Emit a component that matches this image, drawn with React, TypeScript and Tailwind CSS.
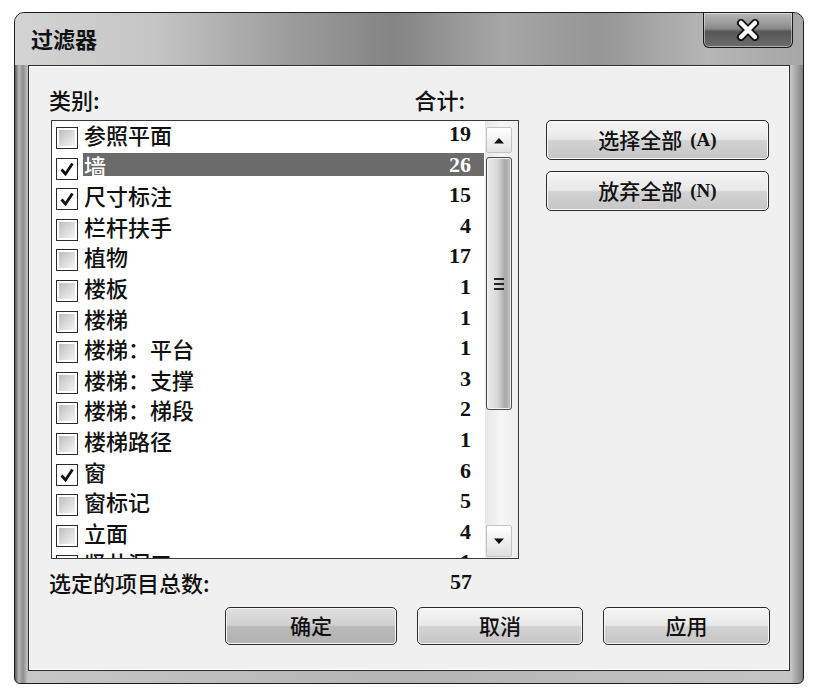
import type { ReactNode } from 'react';

type Row = { name: string; count: string; checked: boolean; selected?: boolean };

const rows: Row[] = [
  { name: '参照平面', count: '19', checked: false },
  { name: '墙', count: '26', checked: true, selected: true },
  { name: '尺寸标注', count: '15', checked: true },
  { name: '栏杆扶手', count: '4', checked: false },
  { name: '植物', count: '17', checked: false },
  { name: '楼板', count: '1', checked: false },
  { name: '楼梯', count: '1', checked: false },
  { name: '楼梯：平台', count: '1', checked: false },
  { name: '楼梯：支撑', count: '3', checked: false },
  { name: '楼梯：梯段', count: '2', checked: false },
  { name: '楼梯路径', count: '1', checked: false },
  { name: '窗', count: '6', checked: true },
  { name: '窗标记', count: '5', checked: false },
  { name: '立面', count: '4', checked: false },
  { name: '竖井洞口', count: '1', checked: false },
];

const cjk = "font-['Noto_Sans_CJK_SC',sans-serif] font-medium";
const digits = "font-['Liberation_Serif',serif] font-bold";

function Checkbox({ checked }: { checked: boolean }) {
  return (
    <div className="w-[22px] h-[22px] shrink-0 border border-[#2a2a2a] bg-white p-[2px]">
      {checked ? (
        <svg viewBox="0 0 16 16" className="w-full h-full">
          <path d="M2.5 8.5 L6.5 13 L13.5 2.5" fill="none" stroke="#111" strokeWidth="2.8" strokeLinejoin="miter" />
        </svg>
      ) : (
        <div className="w-full h-full bg-[linear-gradient(135deg,#bdbdbd_0%,#dadada_50%,#f4f4f4_100%)]" />
      )}
    </div>
  );
}

function WinButton({ children, className, primary }: { children: ReactNode; className: string; primary?: boolean }) {
  return (
    <div
      className={
        'flex items-center justify-center rounded-[5px] border border-[#2b2b2b] shadow-[inset_0_0_0_1px_#f8f8f8] text-[21px] text-[#111] ' +
        (primary
          ? 'bg-[linear-gradient(180deg,#e0e0e0_0%,#d0d0d0_48%,#bababa_52%,#b2b2b2_100%)] '
          : 'bg-[linear-gradient(180deg,#f6f6f6_0%,#e8e8e8_48%,#d2d2d2_52%,#c6c6c6_100%)] ') +
        className
      }
    >
      {children}
    </div>
  );
}

function ScrollBar() {
  return (
    <div className="w-[33px] shrink-0 flex flex-col pl-[1px] pr-[6px] pt-[6px] pb-[1px] bg-[linear-gradient(90deg,#e8e8e8,#f6f6f6_50%,#ececec)]">
      <div className="h-[26px] border border-[#c4c4c4] rounded-[2px] bg-[linear-gradient(180deg,#ffffff,#e4e4e4)] flex items-center justify-center">
        <svg width="12" height="7" viewBox="0 0 12 7">
          <path d="M1 6.5 L6 1 L11 6.5 Z" fill="#111" />
        </svg>
      </div>
      <div className="mt-[4px] h-[253px] border border-[#4a4a4a] rounded-[3px] bg-[linear-gradient(90deg,#ececec_0%,#d6d6d6_45%,#a9a9a9_75%,#c2c2c2_100%)] flex items-center justify-center shadow-[inset_0_0_0_1px_#f4f4f4]">
        <div className="flex flex-col gap-[3px]">
          <div className="w-[10px] h-[2px] bg-[#222]" />
          <div className="w-[10px] h-[2px] bg-[#222]" />
          <div className="w-[10px] h-[2px] bg-[#222]" />
        </div>
      </div>
      <div className="flex-1" />
      <div className="h-[32px] border border-[#c4c4c4] rounded-[2px] bg-[linear-gradient(180deg,#ffffff,#e0e0e0)] flex items-center justify-center">
        <svg width="12" height="7" viewBox="0 0 12 7">
          <path d="M1 0.5 L6 6 L11 0.5 Z" fill="#111" />
        </svg>
      </div>
    </div>
  );
}

export default function App() {
  return (
    <div className={`w-[820px] h-[691px] bg-white pt-[12px] pl-[14px] ${cjk}`}>
      <div className="w-[790px] h-[672px] rounded-t-[10px] rounded-b-[6px] border border-[#1c1c1c] flex flex-col overflow-hidden bg-[linear-gradient(90deg,#5e5e5e_0px,#b8b8b8_4px,#8e8e8e_8px,#c6c6c6_13px,#b4b4b4_50%,#c4c4c4_776px,#808080_100%)]">
        {/* title bar */}
        <div className="h-[52px] shrink-0 flex justify-between pl-[16px] pr-[10px] bg-[linear-gradient(90deg,#d4d4d4_0%,#c4c4c4_18%,#9a9a9a_36%,#848484_48%,#a6a6a6_62%,#969696_74%,#b6b6b6_88%,#a6a6a6_100%)]">
          <div className="pt-[11px] text-[22px] leading-[28px] font-bold text-[#111]">过滤器</div>
          <div className="w-[90px] h-[35px] rounded-b-[6px] border border-t-0 border-[#1a1a1a] bg-[linear-gradient(180deg,#b8b8b8_0%,#8c8c8c_45%,#565656_55%,#6c6c6c_100%)] shadow-[inset_0_0_0_1px_rgba(255,255,255,0.45)] flex items-center justify-center">
            <svg width="26" height="22" viewBox="0 0 26 22">
              <path d="M6 4 L20 18 M20 4 L6 18" stroke="#111" strokeWidth="8" strokeLinecap="round" />
              <path d="M6 4 L20 18 M20 4 L6 18" stroke="#fff" strokeWidth="4.5" strokeLinecap="round" />
            </svg>
          </div>
        </div>

        {/* client area */}
        <div className="flex-1 mx-[13px] mb-[12px] border border-[#2b2b2b] bg-[#f0f0f0] shadow-[inset_0_0_0_1px_#ffffff] flex flex-col pt-[20px] pr-[19px]">
          <div className="flex">
            <div className="flex flex-col">
              <div className="flex pl-[20px] text-[22px] leading-[26px] text-[#111]">
                <span>类别:</span>
                <span className="ml-auto mr-[54px]">合计:</span>
              </div>
              <div className="ml-[22px] mt-[8px] w-[468px] h-[439px] border border-[#3a3a3a] bg-white flex overflow-hidden">
                <div className="flex-1 flex flex-col pr-[1px] overflow-hidden">
                  {rows.map((r) => (
                    <div key={r.name} className="h-[30.6px] shrink-0 flex items-start pl-[4px]">
                      <div className="mt-[6px]">
                        <Checkbox checked={r.checked} />
                      </div>
                      <div
                        className={
                          'ml-[5px] mt-[1.5px] h-[23px] flex-1 flex items-center justify-between pl-[1px] pr-[13px] text-[22px] leading-[22px] ' +
                          (r.selected ? 'bg-[#6b6b6b] text-white' : 'text-[#111]')
                        }
                      >
                        <span>{r.name}</span>
                        <span className={digits}>{r.count}</span>
                      </div>
                    </div>
                  ))}
                </div>
                <ScrollBar />
              </div>
              <div className="mt-[10px] w-[443px] pl-[20px] flex justify-between text-[22px] leading-[26px] text-[#111]">
                <span>选定的项目总数:</span>
                <span className={digits}>57</span>
              </div>
            </div>

            <div className="ml-[27px] flex flex-col">
              <div className="h-[34px]" />
              <WinButton className="w-[223px] h-[40px]">
                选择全部<span className="ml-[8px] font-['Liberation_Serif',serif] text-[19px] font-bold">(A)</span>
              </WinButton>
              <WinButton className="w-[223px] h-[40px] mt-[11px]">
                放弃全部<span className="ml-[8px] font-['Liberation_Serif',serif] text-[19px] font-bold">(N)</span>
              </WinButton>
            </div>
          </div>

          <div className="mt-[12px] flex justify-end gap-[20px]">
            <WinButton primary className="w-[172px] h-[38px]">确定</WinButton>
            <WinButton className="w-[166px] h-[38px]">取消</WinButton>
            <WinButton className="w-[167px] h-[38px]">应用</WinButton>
          </div>
        </div>
      </div>
    </div>
  );
}
